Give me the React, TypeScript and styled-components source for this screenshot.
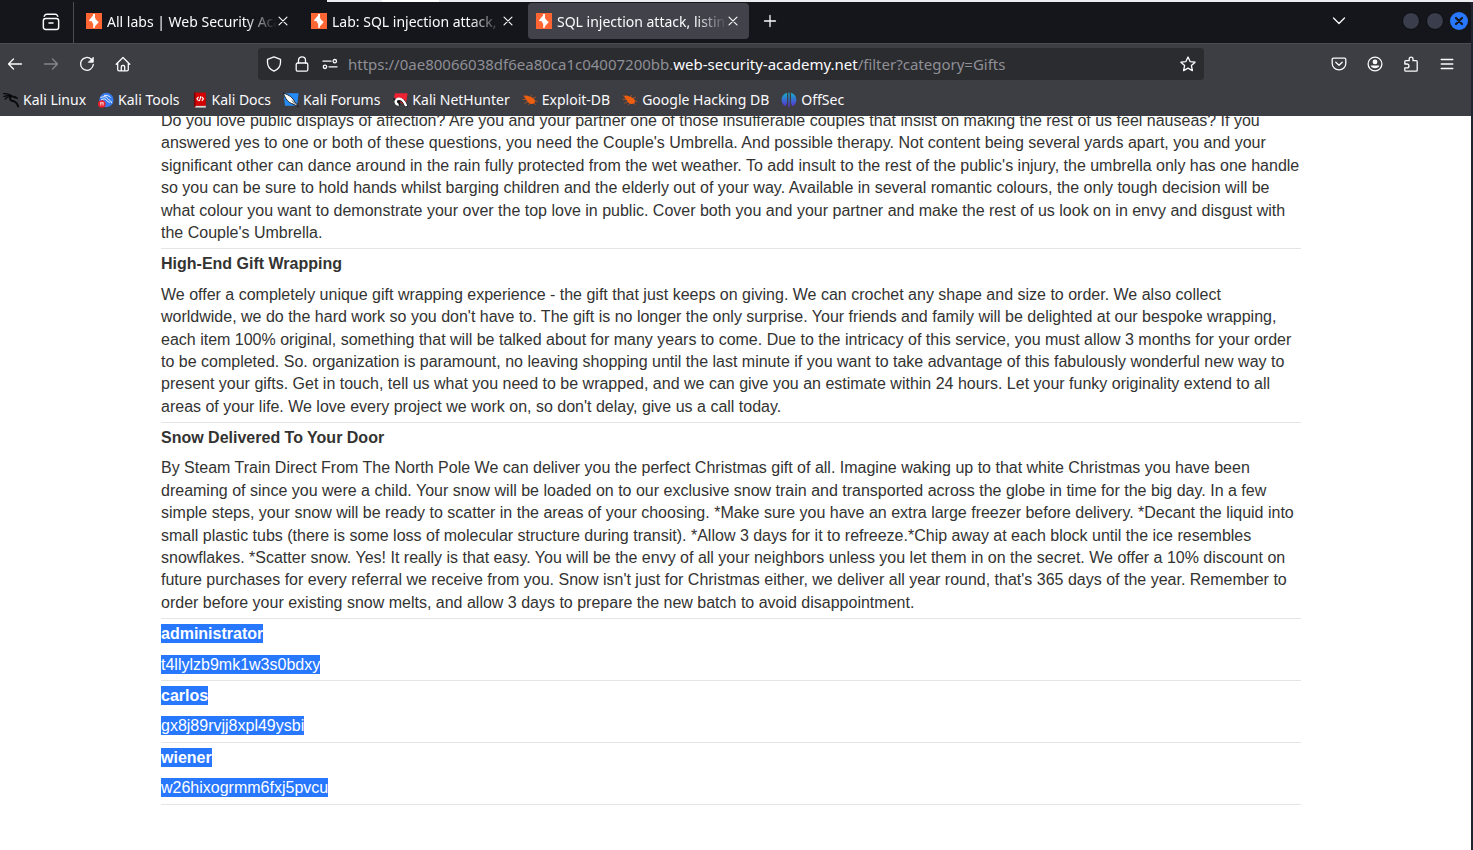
import React from "react";
import styled, { createGlobalStyle, css } from "styled-components";

const GlobalStyle = createGlobalStyle`
  * { box-sizing: border-box; }
  html, body, #root { height: 100%; margin: 0; }
  body { background: #1f2430; overflow: hidden; }
  button, input, a { font: inherit; color: inherit; }
`;

const uiFont = `"Noto Sans", "Open Sans", sans-serif`;

const Window = styled.div`
  display: flex;
  flex-direction: column;
  height: 100vh;
  padding-right: 2px;
  background: #1f2430;
  font-family: ${uiFont};
  font-size: 14px;
  color: #fbfbfe;
`;

const DesktopEdge = styled.div`
  flex: none;
  height: 2px;
  margin-right: -2px;
  background: linear-gradient(to right, #15161b 327px, #eaecef 327px, #eaecef 382px, #ffffff 382px, #ffffff 439px, #eaecef 439px);
`;

const TabStrip = styled.div`
  flex: none;
  display: flex;
  align-items: center;
  height: 41px;
  padding-bottom: 3px;
  background: #15161b;
  border-top-right-radius: 4px;
`;

const FirefoxView = styled.div`
  flex: none;
  display: flex;
  align-items: center;
  justify-content: flex-end;
  align-self: flex-start;
  width: 74px;
  height: 41px;
  padding: 0 12px 2px 0;
  border-right: 1px solid #4b4c52;
`;

const IconButton = styled.button<{ $dim?: boolean; $size?: number }>`
  flex: none;
  display: flex;
  align-items: center;
  justify-content: center;
  width: ${(p) => p.$size ?? 20}px;
  height: ${(p) => p.$size ?? 20}px;
  padding: 0;
  border: 0;
  background: none;
  color: ${(p) => (p.$dim ? "#85868b" : "#fbfbfe")};
`;

const TabList = styled.div`
  display: flex;
  gap: 4px;
  padding-left: 4px;
`;

const TabItem = styled.div<{ $active?: boolean }>`
  display: flex;
  align-items: center;
  width: 221px;
  height: 36px;
  padding: 0 10px 0 8px;
  border-radius: 4px;
  ${(p) =>
    p.$active &&
    css`
      background: #42434a;
    `}
`;

const TabLabel = styled.span`
  flex: 1;
  min-width: 0;
  margin-left: 5px;
  overflow: hidden;
  white-space: nowrap;
  mask-image: linear-gradient(to left, transparent, #000 32px);
`;

const NewTab = styled.div`
  margin-left: 11px;
`;

const WindowControls = styled.div`
  display: flex;
  align-items: center;
  gap: 6px;
  margin-left: auto;
  padding-right: 3px;
`;

const WindowButton = styled.button<{ $close?: boolean }>`
  display: flex;
  align-items: center;
  justify-content: center;
  width: 18px;
  height: 18px;
  padding: 0;
  border: ${(p) => (p.$close ? "0" : "1px solid #0b0c0f")};
  border-radius: 50%;
  background: ${(p) => (p.$close ? "#2777ff" : "#3a3d4b")};
  color: #15161b;
`;

const TabsMenu = styled.div`
  margin-right: 47px;
`;

const NavBar = styled.div`
  flex: none;
  display: flex;
  align-items: center;
  height: 42px;
  padding: 0 14px 1px 5px;
  background: #3d3e43;
  border-top: 1px solid #4b4c52;
`;

const NavGroup = styled.div`
  display: flex;
  gap: 16px;
`;

const UrlBar = styled.div`
  flex: 1;
  display: flex;
  align-items: center;
  height: 32px;
  margin: 0 125px;
  padding: 0 6px;
  border-radius: 4px;
  background: #2b2c30;
`;

const UrlIcons = styled.div`
  display: flex;
  gap: 8px;
`;

const UrlText = styled.a`
  flex: 1;
  margin-left: 8px;
  overflow: hidden;
  white-space: nowrap;
  text-decoration: none;
  font-size: 15px;
  && {
    color: #8f8f96;
  }
  strong {
    font-weight: 400;
    color: #fbfbfe;
  }
`;

const BookmarksBar = styled.nav`
  flex: none;
  display: flex;
  align-items: center;
  gap: 12px;
  height: 31px;
  padding: 0 3px 2px;
  background: #3d3e43;
`;

const Bookmark = styled.a`
  display: flex;
  align-items: center;
  gap: 4px;
  text-decoration: none;
  white-space: nowrap;
`;

const Page = styled.main`
  flex: 1;
  min-height: 0;
  overflow: hidden;
  padding-right: 9px;
  background: #ffffff;
  font-family: "Liberation Sans", Arial, sans-serif;
  font-size: 16px;
  line-height: 1.4;
  color: #333332;
`;

const ProductTable = styled.table`
  width: 100%;
  max-width: 1140px;
  margin: -10px auto 0;
  border-spacing: 0;
`;

const NameCell = styled.th`
  padding: 4px 0;
  text-align: left;
  font-weight: 700;
`;

const TextCell = styled.td`
  padding: 4px 1px 4px 0;
  border-bottom: 1px solid #e5e5e5;
`;

const Selected = styled.mark`
  padding: 1px 0;
  background: #2777ff;
  color: #ffffff;
`;

type IconProps = { size?: number; children: React.ReactNode };
const Icon = ({ size = 16, children }: IconProps) => (
  <svg width={size} height={size} viewBox="0 0 16 16" fill="none" stroke="currentColor" strokeWidth="1.3" strokeLinecap="round" strokeLinejoin="round" aria-hidden="true">
    {children}
  </svg>
);

const BurpLogo = () => (
  <svg width="16" height="16" viewBox="0 0 16 16" aria-hidden="true">
    <rect width="16" height="16" fill="#ff6633" />
    <path d="M9 1V5.400H12.800L9 9.600V8H6.600L3.200 8.200V7L7 2.600V1Z" fill="#fff" />
    <path d="M7.400 6.400L12.400 8.400V9.400L8.800 13.400V15H7.200V10.400H4.400Z" fill="#fff" />
    <path d="M9.800 5L13 5V7.600L9.800 6.800ZM2.800 8.400L6.600 9.400V11H2.800Z" fill="#ff6633" />
  </svg>
);

const CloseGlyph = () => (
  <Icon size={12}>
    <path d="M2.700 2.700l10.600 10.600M13.300 2.700L2.700 13.300" strokeWidth="1.500" />
  </Icon>
);

const KaliIcon = () => (
  <svg width="16" height="16" viewBox="0 0 16 16" fill="none" stroke="#08080a" strokeLinecap="round" aria-hidden="true">
    <path d="M.6 1.600C4 1.400 7 2.200 9 4.200M1 4.600C4 3.200 6.600 3.400 9 4.400M2.200 7.200C3.800 5 6 4.400 8 4.800" strokeWidth="1.300" />
    <path d="M8.400 4.400C6.400 5.600 6.600 8.400 9 8.800C11.400 9.200 13.600 9.600 15.200 14.400" strokeWidth="1.900" />
    <path d="M8.600 4.200L12.400 4.400L15 6.400L12 6Z" fill="#08080a" strokeWidth="0.8" />
  </svg>
);

const ToolsIcon = () => (
  <svg width="16" height="16" viewBox="0 0 16 16" aria-hidden="true">
    <circle cx="8.4" cy="8" r="7.2" fill="#367bf0" />
    <path d="M2.4 5.6C6 4 9 4.6 9.6 6.6c.4 1.6 3 .6 4.2 4.6M3 8c2.6-1.6 5-1.4 5.6.4.6 1.4 2.6 1.2 3.4 2.4M6 3.4c3-.4 5 .4 6.600 2.200" stroke="#fff" strokeWidth="0.9" fill="none" />
    <circle cx="3.8" cy="12" r="3.8" fill="#e8202c" />
    <path d="M2.8 10.600v3M5 10.600v3M2 10.800h3.600" stroke="#fff" strokeWidth="0.8" />
  </svg>
);

const DocsIcon = () => (
  <svg width="16" height="16" viewBox="0 0 16 16" aria-hidden="true">
    <path d="M2.4 13.4h11.4v2.2H2.4z" fill="#d9d9d9" />
    <path d="M2 .6h11.8v13.2H2z" fill="#d40000" />
    <path d="M2 .6h1.4v14.8H2z" fill="#7a0000" />
    <path d="M6.6 4.8L4.9 6.8l1.7 2M9.8 4.8l1.7 2-1.7 2M8.9 4.2L7.4 9.2" stroke="#fff" strokeWidth="1.1" fill="none" />
  </svg>
);

const ForumsIcon = () => (
  <svg width="16" height="16" viewBox="0 0 16 16" aria-hidden="true">
    <path d="M.5 1.2H15.600L14 13.800H2Z" fill="#268cf5" />
    <path d="M.4 1.2C6 2.600 10 6 11.600 9.600L15.600 14.800 10 12C5.400 11 2.200 6.600 .4 1.200Z" fill="#fff" stroke="#101114" strokeWidth="0.9" />
    <path d="M9 8.600l3 3" stroke="#101114" strokeWidth="0.8" />
  </svg>
);

const HunterIcon = () => (
  <svg width="16" height="16" viewBox="0 0 16 16" aria-hidden="true">
    <path d="M3 1.200H15.600L13.600 14L8 10L2 5Z" fill="#ee2233" />
    <path d="M14.400 14.600C12.600 9.400 9.800 7 7 8C5.200 8.800 5.400 11 7.400 12" fill="none" stroke="#111" strokeWidth="3.600" />
    <path d="M14.200 14.200C12.400 9 9 5.800 5.600 7C2.600 8.200 3.200 12.400 7 12.600" fill="none" stroke="#fff" strokeWidth="2.400" />
    <path d="M1.400 6.800L3.200 8M6.400 11.400L8.200 13.200" stroke="#111" strokeWidth="1.200" />
  </svg>
);

const ExploitIcon = () => (
  <svg width="16" height="16" viewBox="0 0 16 16" aria-hidden="true">
    <path d="M2.6 3.8C5 2.8 6.6 4.4 8 4.8c3 .8 5.4 2.6 5 5-.4 2-2.8 2.8-5.2 1.6C5.4 10.4 5 8.6 4.2 7.2 3 6.4 2 5.4 2.6 3.8Z" fill="#ec5e10" />
    <path d="M1 3.6l3 1.6M.8 7.4l4 .2M2.4 11.4l4-2M6 13.2l2.4-2.4M8 4.8l2-1.6M11 6.2l3-1.2M13 9l2.4.4M11.6 11l2 1.6" stroke="#ec5e10" strokeWidth="0.6" />
  </svg>
);

const OffSecIcon = () => (
  <svg width="16" height="16" viewBox="0 0 16 16" aria-hidden="true">
    <defs>
      <linearGradient id="offsec" x1="0" y1="0" x2="0" y2="16" gradientUnits="userSpaceOnUse">
        <stop offset="0" stopColor="#12b5c8" />
        <stop offset="1" stopColor="#5f23d8" />
      </linearGradient>
    </defs>
    <path d="M6 .8V11L4.400 14.200C2 12.800 .6 10.600 .6 8C.6 4.400 3 1.600 6 .8ZM7.300 .8H8.700V15.200H7.300ZM10 .8C13 1.600 15.400 4.400 15.400 8C15.400 10.600 14 12.800 11.600 14.200L10 11Z" fill="url(#offsec)" />
  </svg>
);

const tabs = [
  { title: "All labs | Web Security Aca" },
  { title: "Lab: SQL injection attack, l" },
  { title: "SQL injection attack, listin", active: true },
];

const bookmarks = [
  { label: "Kali Linux", icon: <KaliIcon /> },
  { label: "Kali Tools", icon: <ToolsIcon /> },
  { label: "Kali Docs", icon: <DocsIcon /> },
  { label: "Kali Forums", icon: <ForumsIcon /> },
  { label: "Kali NetHunter", icon: <HunterIcon /> },
  { label: "Exploit-DB", icon: <ExploitIcon /> },
  { label: "Google Hacking DB", icon: <ExploitIcon /> },
  { label: "OffSec", icon: <OffSecIcon /> },
];

const umbrella =
  "Do you love public displays of affection? Are you and your partner one of those insufferable couples that insist on making the rest of us feel nauseas? If you answered yes to one or both of these questions, you need the Couple's Umbrella. And possible therapy. Not content being several yards apart, you and your significant other can dance around in the rain fully protected from the wet weather. To add insult to the rest of the public's injury, the umbrella only has one handle so you can be sure to hold hands whilst barging children and the elderly out of your way. Available in several romantic colours, the only tough decision will be what colour you want to demonstrate your over the top love in public. Cover both you and your partner and make the rest of us look on in envy and disgust with the Couple's Umbrella.";

const products = [
  {
    name: "High-End Gift Wrapping",
    text: "We offer a completely unique gift wrapping experience - the gift that just keeps on giving. We can crochet any shape and size to order. We also collect worldwide, we do the hard work so you don't have to. The gift is no longer the only surprise. Your friends and family will be delighted at our bespoke wrapping, each item 100% original, something that will be talked about for many years to come. Due to the intricacy of this service, you must allow 3 months for your order to be completed. So. organization is paramount, no leaving shopping until the last minute if you want to take advantage of this fabulously wonderful new way to present your gifts. Get in touch, tell us what you need to be wrapped, and we can give you an estimate within 24 hours. Let your funky originality extend to all areas of your life. We love every project we work on, so don't delay, give us a call today.",
  },
  {
    name: "Snow Delivered To Your Door",
    text: "By Steam Train Direct From The North Pole We can deliver you the perfect Christmas gift of all. Imagine waking up to that white Christmas you have been dreaming of since you were a child. Your snow will be loaded on to our exclusive snow train and transported across the globe in time for the big day. In a few simple steps, your snow will be ready to scatter in the areas of your choosing. *Make sure you have an extra large freezer before delivery. *Decant the liquid into small plastic tubs (there is some loss of molecular structure during transit). *Allow 3 days for it to refreeze.*Chip away at each block until the ice resembles snowflakes. *Scatter snow. Yes! It really is that easy. You will be the envy of all your neighbors unless you let them in on the secret. We offer a 10% discount on future purchases for every referral we receive from you. Snow isn't just for Christmas either, we deliver all year round, that's 365 days of the year. Remember to order before your existing snow melts, and allow 3 days to prepare the new batch to avoid disappointment.",
  },
  { name: "administrator", text: "t4llylzb9mk1w3s0bdxy", selected: true },
  { name: "carlos", text: "gx8j89rvjj8xpl49ysbi", selected: true },
  { name: "wiener", text: "w26hixogrmm6fxj5pvcu", selected: true },
];

export default function App() {
  return (
    <Window>
      <GlobalStyle />
      <DesktopEdge />
      <TabStrip>
        <FirefoxView>
          <IconButton aria-label="Firefox View">
            <Icon size={18}>
              <rect x="1.200" y="4.800" width="13.600" height="9.800" rx="2" />
              <path d="M2 2.900C2.600 1.600 3.200 1.200 4.200 1.200h7.600c1 0 1.600.4 2.200 1.700M6.200 8.800h3.600" />
            </Icon>
          </IconButton>
        </FirefoxView>
        <TabList>
          {tabs.map((t) => (
            <TabItem key={t.title} $active={t.active}>
              <BurpLogo />
              <TabLabel>{t.title}</TabLabel>
              <IconButton aria-label="Close tab" $size={12}>
                <CloseGlyph />
              </IconButton>
            </TabItem>
          ))}
        </TabList>
        <NewTab>
          <IconButton aria-label="New tab">
            <Icon>
              <path d="M8 2.500v11M2.500 8h11" />
            </Icon>
          </IconButton>
        </NewTab>
        <WindowControls>
          <TabsMenu>
            <IconButton aria-label="List all tabs">
              <Icon>
                <path d="M2.500 5l5.500 5.500L13.500 5" />
              </Icon>
            </IconButton>
          </TabsMenu>
          <WindowButton aria-label="Minimize" />
          <WindowButton aria-label="Maximize" />
          <WindowButton aria-label="Close window" $close>
            <svg width="10" height="10" viewBox="0 0 10 10" stroke="currentColor" strokeWidth="2.200" strokeLinecap="round" aria-hidden="true">
              <path d="M2 2l6 6M8 2L2 8" />
            </svg>
          </WindowButton>
        </WindowControls>
      </TabStrip>
      <NavBar>
        <NavGroup>
          <IconButton aria-label="Back">
            <Icon>
              <path d="M14.500 8H1.500M6.500 3L1.500 8l5 5" />
            </Icon>
          </IconButton>
          <IconButton aria-label="Forward" $dim>
            <Icon>
              <path d="M1.500 8h13M9.500 3l5 5-5 5" />
            </Icon>
          </IconButton>
          <IconButton aria-label="Reload">
            <Icon>
              <path d="M14.300 8.500A6.400 6.400 0 1 1 12.300 3.200" />
              <path d="M14.300 1.600V6.300H9.600Z" fill="currentColor" strokeWidth="0.800" />
            </Icon>
          </IconButton>
          <IconButton aria-label="Home">
            <Icon>
              <path d="M1.200 8.200L8 1.500l6.800 6.700M2.700 7v6.500c0 .8.500 1.300 1.300 1.300h8c.8 0 1.300-.5 1.300-1.300V7M6.300 14.500v-3.700c0-.8.500-1.300 1.300-1.300h.8c.8 0 1.300.5 1.300 1.300v3.700" />
            </Icon>
          </IconButton>
        </NavGroup>
        <UrlBar>
          <UrlIcons>
            <IconButton aria-label="Tracking protection">
              <Icon>
                <path d="M8 .8l6.500 2.500V6.500c0 4-3 7.200-6.500 8.700C4.500 13.700 1.500 10.500 1.500 6.500V3.300Z" />
              </Icon>
            </IconButton>
            <IconButton aria-label="Connection secure">
              <Icon>
                <rect x="2.200" y="7" width="11.600" height="8.200" rx="1.500" />
                <path d="M4.500 7V4.200C4.500 2.200 6 .8 8 .8s3.500 1.400 3.500 3.400V7" />
              </Icon>
            </IconButton>
            <IconButton aria-label="Permissions">
              <Icon>
                <path d="M1 5.200h8M7 10.800h8" />
                <circle cx="12.800" cy="5.200" r="1.700" />
                <circle cx="3" cy="10.800" r="1.700" />
              </Icon>
            </IconButton>
          </UrlIcons>
          <UrlText href="#">
            https://0ae80066038df6ea80ca1c04007200bb.<strong>web-security-academy.net</strong>/filter?category=Gifts
          </UrlText>
          <IconButton aria-label="Bookmark this page">
            <Icon>
              <path d="M8 1l2.100 4.600 5 .6-3.700 3.400 1 5L8 12.100l-4.400 2.500 1-5L.9 6.200l5-.6Z" />
            </Icon>
          </IconButton>
        </UrlBar>
        <NavGroup>
          <IconButton aria-label="Save to Pocket">
            <Icon>
              <path d="M2.500 2.200h11c.8 0 1.300.5 1.300 1.300V7.500a6.800 6.300 0 0 1-13.600 0V3.500c0-.8.500-1.300 1.300-1.300ZM4.800 6.200L8 9.200l3.200-3" />
            </Icon>
          </IconButton>
          <IconButton aria-label="Account">
            <Icon>
              <circle cx="8" cy="8" r="6.900" />
              <circle cx="8" cy="5.900" r="2.400" fill="currentColor" stroke="none" />
              <path d="M3.600 9.600h8.800a4.600 3.900 0 0 1-8.800 0Z" fill="currentColor" stroke="none" />
            </Icon>
          </IconButton>
          <IconButton aria-label="Extensions">
            <Icon>
              <path d="M1.800 8V5.700c0-.6.400-1 1-1h3.400V3a1.900 1.900 0 0 1 3.800 0v1.700h3.200c.6 0 1 .4 1 1v8.500c0 .6-.4 1-1 1H2.800c-.6 0-1-.4-1-1v-2.300H4a1.900 1.900 0 0 0 0-3.900Z" />
            </Icon>
          </IconButton>
          <IconButton aria-label="Application menu">
            <Icon>
              <path d="M2.200 3.500h11.600M2.200 8h11.600M2.200 12.500h11.600" />
            </Icon>
          </IconButton>
        </NavGroup>
      </NavBar>
      <BookmarksBar aria-label="Bookmarks">
        {bookmarks.map((b) => (
          <Bookmark key={b.label} href="#">
            {b.icon}
            {b.label}
          </Bookmark>
        ))}
      </BookmarksBar>
      <Page>
        <ProductTable>
          <tbody>
            <tr>
              <TextCell>{umbrella}</TextCell>
            </tr>
            {products.map((p) => (
              <React.Fragment key={p.name}>
                <tr>
                  <NameCell scope="row">{p.selected ? <Selected>{p.name}</Selected> : p.name}</NameCell>
                </tr>
                <tr>
                  <TextCell>{p.selected ? <Selected>{p.text}</Selected> : p.text}</TextCell>
                </tr>
              </React.Fragment>
            ))}
          </tbody>
        </ProductTable>
      </Page>
    </Window>
  );
}
